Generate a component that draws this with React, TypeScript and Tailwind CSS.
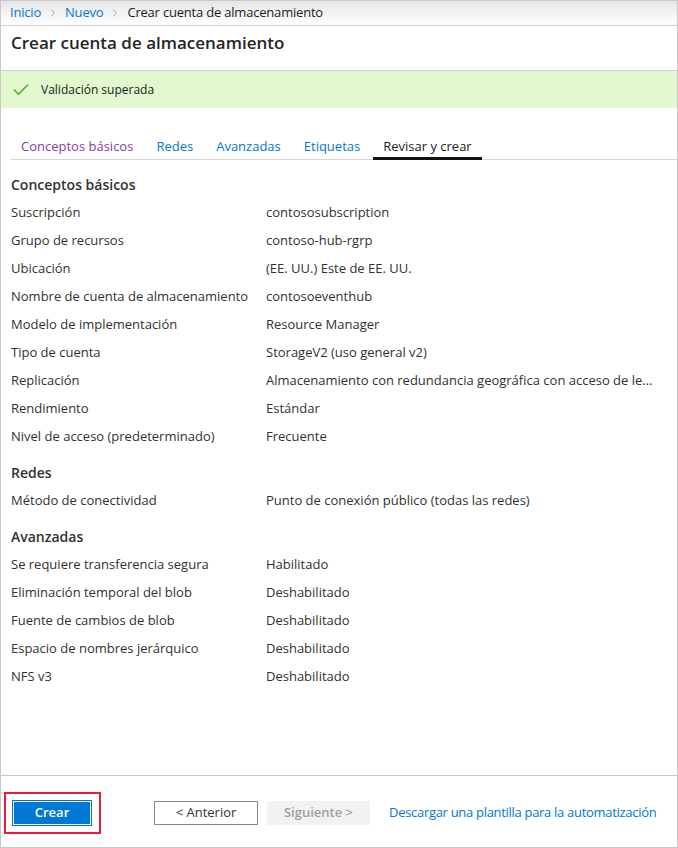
import { Check, ChevronRight } from "lucide-react";

const sections = [
  {
    title: "Conceptos básicos",
    rows: [
      ["Suscripción", "contososubscription"],
      ["Grupo de recursos", "contoso-hub-rgrp"],
      ["Ubicación", "(EE. UU.) Este de EE. UU."],
      ["Nombre de cuenta de almacenamiento", "contosoeventhub"],
      ["Modelo de implementación", "Resource Manager"],
      ["Tipo de cuenta", "StorageV2 (uso general v2)"],
      ["Replicación", "Almacenamiento con redundancia geográfica con acceso de lectura (RA-GRS)"],
      ["Rendimiento", "Estándar"],
      ["Nivel de acceso (predeterminado)", "Frecuente"],
    ],
  },
  {
    title: "Redes",
    rows: [["Método de conectividad", "Punto de conexión público (todas las redes)"]],
  },
  {
    title: "Avanzadas",
    rows: [
      ["Se requiere transferencia segura", "Habilitado"],
      ["Eliminación temporal del blob", "Deshabilitado"],
      ["Fuente de cambios de blob", "Deshabilitado"],
      ["Espacio de nombres jerárquico", "Deshabilitado"],
      ["NFS v3", "Deshabilitado"],
    ],
  },
];

const tabs = ["Conceptos básicos", "Redes", "Avanzadas", "Etiquetas", "Revisar y crear"];

export default function App() {
  return (
    <div
      className="w-[678px] h-[848px] bg-white text-[#323130] text-[13px] flex flex-col border border-[#c8c8c8]"
      style={{ fontFamily: '"Open Sans", "Noto Sans", sans-serif' }}
    >
      {/* Breadcrumb */}
      <div className="h-[25px] shrink-0 flex items-center px-[9px] gap-[6px] tracking-[-0.2px] bg-gradient-to-b from-[#e6e6e6] to-white border-b border-[#d0d0d0]">
        <span className="text-[#0078d4]">Inicio</span>
        <ChevronRight className="w-3 h-3 text-[#8a8a8a]" strokeWidth={1.5} />
        <span className="text-[#0078d4]">Nuevo</span>
        <ChevronRight className="w-3 h-3 text-[#8a8a8a]" strokeWidth={1.5} />
        <span className="text-[#1b1b1b]">Crear cuenta de almacenamiento</span>
      </div>

      {/* Title */}
      <div className="h-[44px] shrink-0 flex items-center px-[10px] pb-[10px]">
        <h1 className="text-[17px] font-semibold text-[#252525]">Crear cuenta de almacenamiento</h1>
      </div>

      {/* Validation */}
      <div className="h-[38px] shrink-0 flex items-center gap-[10px] px-[10px] bg-[#e2f8cf] border-t border-[#d0d0d0]">
        <Check className="w-[20px] h-[20px] text-[#4caf25]" strokeWidth={1.8} />
        <span className="text-[12px] text-[#1b1b1b]">Validación superada</span>
      </div>

      {/* Tabs */}
      <div className="mt-[29px] ml-[10px] flex gap-[3px] border-b border-[#d6d6d6]">
        {tabs.map((t, i) => (
          <div
            key={t}
            className={`px-[10px] ${
              i === 4
                ? "text-[#1b1b1b] border-b-[3px] border-[#111] -mb-[1px]"
                : i === 0
                ? "text-[#8a3aac] pb-[2px]"
                : "text-[#0078d4] pb-[2px]"
            }`}
          >
            {t}
          </div>
        ))}
      </div>

      {/* Summary */}
      <div className="mt-[11px] px-[10px] flex flex-col gap-[8px]">
        {sections.map((s) => (
          <div key={s.title} className="flex flex-col">
            <div className="h-[28px] flex items-center text-[14px] font-semibold text-[#323130]">{s.title}</div>
            {s.rows.map(([k, v]) => (
              <div key={k} className="h-[28px] flex items-center">
                <div className="w-[255px] shrink-0 truncate">{k}</div>
                <div className="w-[390px] truncate">{v}</div>
              </div>
            ))}
          </div>
        ))}
      </div>

      {/* Footer */}
      <div className="mt-auto h-[72px] shrink-0 border-t border-[#c8c8c8] flex items-center pl-[3px] pt-[3px]">
        <div className="border-2 border-[#e81c3c] pl-[7px] pr-[8px] py-[7px]">
          <button className="w-[78px] h-[24px] bg-[#0078d4] text-white font-semibold border border-white outline outline-1 outline-[#0078d4]">
            Crear
          </button>
        </div>
        <button className="ml-[53px] w-[104px] h-[24px] border border-[#8a8a8a] text-[#323130] bg-white">
          &lt; Anterior
        </button>
        <button className="ml-[9px] w-[103px] h-[24px] bg-[#f3f2f1] text-[#a19f9d] font-semibold">
          Siguiente &gt;
        </button>
        <span className="ml-[19px] text-[#0078d4] tracking-[-0.3px]">Descargar una plantilla para la automatización</span>
      </div>
    </div>
  );
}
